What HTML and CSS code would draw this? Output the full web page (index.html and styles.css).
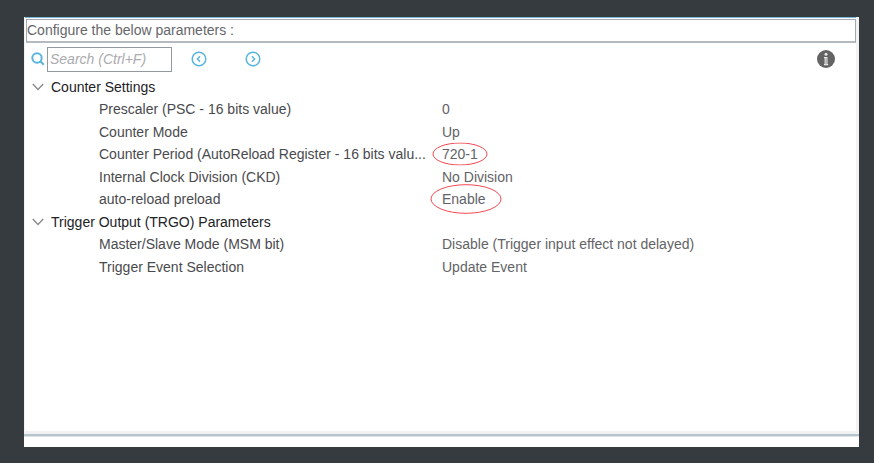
FILE: index.html
```
<!DOCTYPE html>
<html lang="en">
<head>
<meta charset="utf-8">
<title>Parameter Settings</title>
<link rel="stylesheet" href="styles.css">
</head>
<body>
<main class="panel">
  <div class="content">
    <h1 class="heading">Configure the below parameters :</h1>
    <div class="toolbar">
      <label class="search-label" for="search" aria-label="Search">
        <svg width="14" height="14" viewBox="0 0 14 14"><circle cx="6" cy="6" r="4.7"/><path d="M9.2 9.2 L12.8 12.8"/></svg>
      </label>
      <input class="search" id="search" type="text" placeholder="Search (Ctrl+F)">
      <button class="nav" type="button" aria-label="Previous">
        <svg width="16" height="16" viewBox="0 0 16 16"><circle cx="8" cy="8" r="6.8"/><path d="M9 5.2 L6.4 8 L9 10.8"/></svg>
      </button>
      <button class="nav" type="button" aria-label="Next">
        <svg width="16" height="16" viewBox="0 0 16 16"><circle cx="8" cy="8" r="6.8"/><path d="M7 5.2 L9.6 8 L7 10.8"/></svg>
      </button>
      <button class="info" type="button" aria-label="Information">
        <svg width="18" height="18" viewBox="0 0 18 18"><circle cx="9" cy="9" r="9" fill="#636363"/><circle cx="9" cy="4.2" r="1.5" fill="#e8e8e8"/><path d="M7 7 H10.5 V14 H11.2 V15.2 H7 V14 H7.6 V8.2 H7 Z" fill="#e8e8e8"/><path d="M9.1 8 V14.2" stroke="#858585" stroke-width="0.8"/></svg>
      </button>
    </div>
    <table class="params">
      <tbody>
        <tr><th class="group" colspan="2"><button class="toggle" type="button" aria-expanded="true"><svg width="12" height="8" viewBox="0 0 12 8"><path d="M0.8 1 L6 6.5 L11.2 1"/></svg>Counter Settings</button></th></tr>
        <tr><th class="name">Prescaler (PSC - 16 bits value)</th><td>0</td></tr>
        <tr><th class="name">Counter Mode</th><td>Up</td></tr>
        <tr><th class="name">Counter Period (AutoReload Register - 16 bits valu...</th><td><span class="marked">720-1<svg class="ring ring-small" viewBox="0 0 56 23"><ellipse cx="28" cy="11.5" rx="27" ry="11"/></svg></span></td></tr>
        <tr><th class="name">Internal Clock Division (CKD)</th><td>No Division</td></tr>
        <tr><th class="name">auto-reload preload</th><td><span class="marked">Enable<svg class="ring ring-large" viewBox="0 0 72 30"><ellipse cx="36" cy="15" rx="35" ry="14.3"/></svg></span></td></tr>
        <tr><th class="group" colspan="2"><button class="toggle" type="button" aria-expanded="true"><svg width="12" height="8" viewBox="0 0 12 8"><path d="M0.8 1 L6 6.5 L11.2 1"/></svg>Trigger Output (TRGO) Parameters</button></th></tr>
        <tr><th class="name">Master/Slave Mode (MSM bit)</th><td>Disable (Trigger input effect not delayed)</td></tr>
        <tr><th class="name">Trigger Event Selection</th><td>Update Event</td></tr>
      </tbody>
    </table>
  </div>
  <footer class="strip"></footer>
</main>
</body>
</html>
```
FILE: styles.css
```
* { box-sizing: border-box; }

body {
  margin: 0;
  min-height: 100vh;
  padding: 17px 15px 16px 24px;
  display: flex;
  background: #363b3f;
  font: 14px/22px "Liberation Sans", Arial, sans-serif;
  color: #4a4a4e;
}

button {
  padding: 0;
  border: 0;
  background: none;
  font: inherit;
  color: inherit;
}

svg { display: block; flex: none; }

.panel {
  flex: 1;
  min-width: 0;
  display: flex;
  flex-direction: column;
  background: #fff;
}

.content {
  flex: 1;
  border: solid #f1f2f4;
  border-width: 0 3px 3px 1px;
  box-shadow: inset 0 1px #75b9d6;
  padding: 2px 0 0 1px;
}

.heading {
  margin: 0;
  height: 24px;
  border: 1px solid #a3a8b2;
  border-bottom-width: 2px;
  border-bottom-color: #b5bac2;
  font-size: 14px;
  line-height: 21px;
  font-weight: normal;
  color: #66666a;
}

.toolbar {
  display: flex;
  align-items: center;
  height: 32px;
  padding: 0 21px 0 5px;
}

.search-label { margin-right: 2px; }

.search-label svg,
.nav svg {
  fill: none;
  stroke: #58b5e0;
  stroke-width: 1.5;
}

.search-label svg { stroke-width: 2; }

.search {
  width: 125px;
  height: 25px;
  margin-right: 19px;
  padding: 0 2px;
  border: 1px solid #92999f;
  border-radius: 0;
  outline: 0;
  font: italic 14px "Liberation Sans", Arial, sans-serif;
}

.search::placeholder { color: #ababaf; opacity: 1; }

.nav { margin-right: 38px; }

.info { margin-left: auto; }

.params {
  width: 100%;
  table-layout: fixed;
  border-collapse: collapse;
}

.params tr { height: 22px; }
.params tr:nth-child(odd) { height: 23px; }

.params th,
.params td {
  padding: 0;
  font-weight: normal;
  text-align: left;
  white-space: nowrap;
}

.params td {
  padding-left: 1px;
  color: #636367;
}

.params .group {
  padding-left: 6px;
  color: #222226;
}

.params .name {
  padding-left: 73px;
  overflow: hidden;
  text-overflow: ellipsis;
}

.toggle {
  display: flex;
  align-items: center;
  gap: 7px;
}

.toggle svg {
  fill: none;
  stroke: #8b8b8b;
  stroke-width: 1.4;
}

.marked { position: relative; }

.ring {
  position: absolute;
  top: 50%;
  transform: translateY(-50%);
  fill: none;
  stroke: #f04a50;
  stroke-width: 1;
}

.ring-small { left: -10px; width: 56px; height: 23px; }
.ring-large { left: -12px; width: 72px; height: 30px; }

.strip {
  height: 13px;
  border-top: 2px solid #b7c3cb;
  box-shadow: inset 0 1px #dde5ea;
}
```
